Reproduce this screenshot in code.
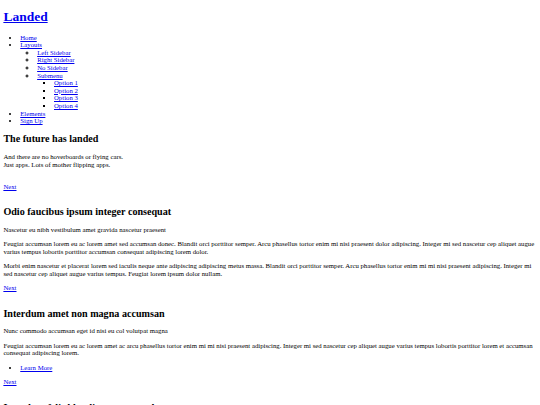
import React from 'react';

/**
 * Landed — 스타일시트 없이 렌더된 페이지 (브라우저 기본 스타일)
 * 원본 1280px 화면을 540px로 축소한 비율(0.421875)에 맞춘 크기
 */

const link = 'text-[#0000ee] underline';

function NextLink() {
  return (
    <a href="#" className={link}>
      Next
    </a>
  );
}

// 깨진 이미지 자리: 빈 줄 한 칸만 차지
function ImageSlot() {
  return <div className="h-[7.594px]" aria-hidden />;
}

function Heading({ children }: { children: React.ReactNode }) {
  return <h2 className="text-[10.125px] leading-[11.39px] font-bold my-[8.404px]">{children}</h2>;
}

function Para({ children }: { children: React.ReactNode }) {
  return <p className="my-[6.75px]">{children}</p>;
}

export default function App() {
  return (
    <div className="m-[3.375px] font-['Liberation_Serif','Times_New_Roman',serif] text-[6.75px] leading-[7.594px] text-black">
      {/* Header */}
      <header>
        <h1 className="text-[13.5px] leading-[15.61px] font-bold my-[9.045px]">
          <a href="#" className={link}>
            Landed
          </a>
        </h1>
        <nav>
          <ul className="list-disc pl-[16.875px] my-[6.75px]">
            <li>
              <a href="#" className={link}>Home</a>
            </li>
            <li>
              <a href="#" className={link}>Layouts</a>
              <ul className="list-[circle] pl-[16.875px]">
                <li><a href="#" className={link}>Left Sidebar</a></li>
                <li><a href="#" className={link}>Right Sidebar</a></li>
                <li><a href="#" className={link}>No Sidebar</a></li>
                <li>
                  <a href="#" className={link}>Submenu</a>
                  <ul className="list-[square] pl-[16.875px]">
                    <li><a href="#" className={link}>Option 1</a></li>
                    <li><a href="#" className={link}>Option 2</a></li>
                    <li><a href="#" className={link}>Option 3</a></li>
                    <li><a href="#" className={link}>Option 4</a></li>
                  </ul>
                </li>
              </ul>
            </li>
            <li>
              <a href="#" className={link}>Elements</a>
            </li>
            <li>
              <a href="#" className={link}>Sign Up</a>
            </li>
          </ul>
        </nav>
      </header>

      {/* Banner */}
      <section>
        <div>
          <header>
            <Heading>The future has landed</Heading>
            <Para>
              And there are no hoverboards or flying cars.
              <br />
              Just apps. Lots of mother flipping apps.
            </Para>
          </header>
          <ImageSlot />
        </div>
        <NextLink />
      </section>

      {/* One */}
      <section>
        <ImageSlot />
        <div>
          <header>
            <Heading>Odio faucibus ipsum integer consequat</Heading>
            <Para>Nascetur eu nibh vestibulum amet gravida nascetur praesent</Para>
          </header>
          <Para>
            Feugiat accumsan lorem eu ac lorem amet sed accumsan donec. Blandit orci porttitor semper. Arcu phasellus
            tortor enim mi nisi praesent dolor adipiscing. Integer mi sed nascetur cep aliquet augue varius tempus
            lobortis porttitor accumsan consequat adipiscing lorem dolor.
          </Para>
          <Para>
            Morbi enim nascetur et placerat lorem sed iaculis neque ante adipiscing adipiscing metus massa. Blandit orci
            porttitor semper. Arcu phasellus tortor enim mi mi nisi praesent adipiscing. Integer mi sed nascetur cep
            aliquet augue varius tempus. Feugiat lorem ipsum dolor nullam.
          </Para>
        </div>
        <NextLink />
      </section>

      {/* Two */}
      <section>
        <ImageSlot />
        <div>
          <header>
            <Heading>Interdum amet non magna accumsan</Heading>
            <Para>Nunc commodo accumsan eget id nisi eu col volutpat magna</Para>
          </header>
          <Para>
            Feugiat accumsan lorem eu ac lorem amet ac arcu phasellus tortor enim mi mi nisi praesent adipiscing.
            Integer mi sed nascetur cep aliquet augue varius tempus lobortis porttitor lorem et accumsan consequat
            adipiscing lorem.
          </Para>
          <ul className="list-disc pl-[16.875px] my-[6.75px]">
            <li>
              <a href="#" className={link}>Learn More</a>
            </li>
          </ul>
        </div>
        <NextLink />
      </section>

      {/* Three */}
      <section>
        <ImageSlot />
        <div>
          <header>
            <Heading>Interdum felis blandit praesent sed augue</Heading>
            <Para>Accumsan integer ultricies aliquam vel massa sapien phasellus</Para>
          </header>
        </div>
      </section>
    </div>
  );
}
